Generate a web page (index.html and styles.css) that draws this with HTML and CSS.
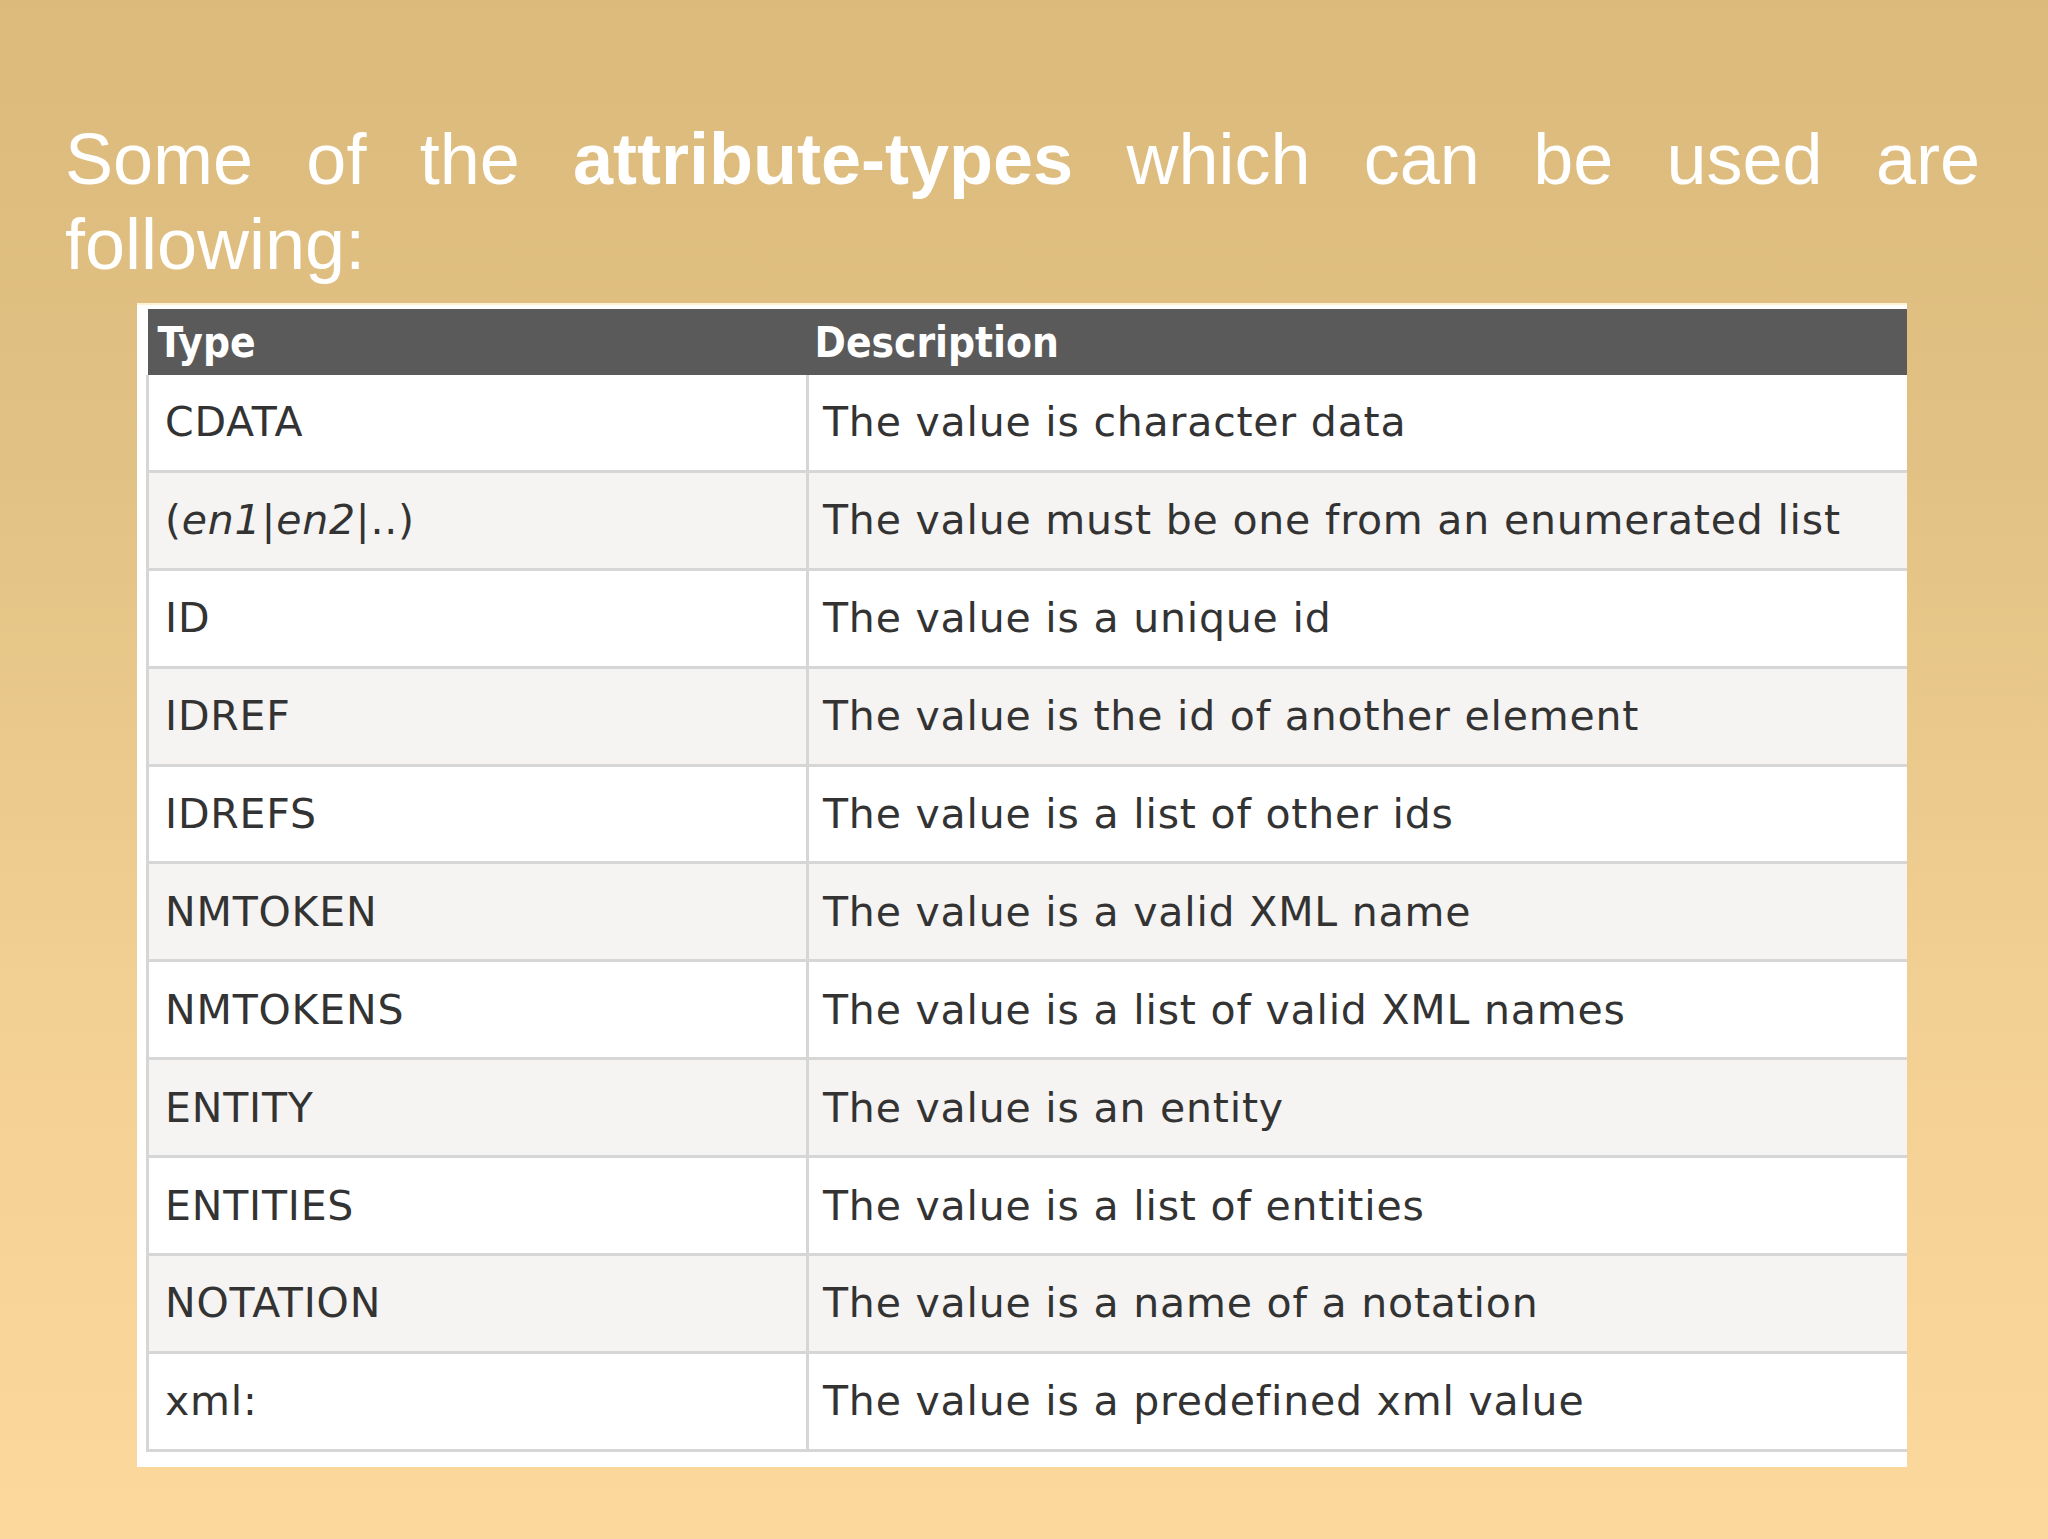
FILE: index.html
```html
<!DOCTYPE html>
<html>
<head>
<meta charset="utf-8">
<link rel="stylesheet" href="styles.css">
</head>
<body>
<div class="slide">
  <p class="title">Some of the <b>attribute-types</b> which can be used are following:</p>
  <div class="frame">
    <table class="types">
      <thead>
        <tr><th class="c1">Type</th><th class="c2">Description</th></tr>
      </thead>
      <tbody>
        <tr><td>CDATA</td><td>The value is character data</td></tr>
        <tr><td>(<i>en1</i>|<i>en2</i>|..)</td><td>The value must be one from an enumerated list</td></tr>
        <tr><td>ID</td><td>The value is a unique id</td></tr>
        <tr><td>IDREF</td><td>The value is the id of another element</td></tr>
        <tr><td>IDREFS</td><td>The value is a list of other ids</td></tr>
        <tr><td>NMTOKEN</td><td>The value is a valid XML name</td></tr>
        <tr><td>NMTOKENS</td><td>The value is a list of valid XML names</td></tr>
        <tr><td>ENTITY</td><td>The value is an entity</td></tr>
        <tr><td>ENTITIES</td><td>The value is a list of entities</td></tr>
        <tr><td>NOTATION</td><td>The value is a name of a notation</td></tr>
        <tr><td>xml:</td><td>The value is a predefined xml value</td></tr>
      </tbody>
    </table>
  </div>
</div>
</body>
</html>
```

FILE: styles.css
```css
html, body {
  margin: 0;
  padding: 0;
}
body {
  width: 2048px;
  height: 1539px;
  overflow: hidden;
}
.slide {
  width: 2048px;
  height: 1539px;
  box-sizing: border-box;
  padding-top: 117px;
  background: linear-gradient(180deg, #dbba7c 0%, #e2c284 30%, #f2cf93 65%, #fdd89d 100%);
}
.title {
  margin: 0 0 16px 65px;
  width: 1915px;
  font-family: "Liberation Sans", Arial, sans-serif;
  font-size: 72px;
  line-height: 85px;
  color: #ffffff;
  text-align: justify;
  text-align-last: left;
}
.title b {
  font-weight: bold;
}
.frame {
  margin-left: 137px;
  width: 1770px;
  box-sizing: border-box;
  background: #ffffff;
  border-top: 2px solid #fff3d4;
  padding: 4px 0 15px 9px;
}
.types {
  width: 100%;
  border-collapse: collapse;
  font-family: "DejaVu Sans", Verdana, sans-serif;
  font-size: 41px;
  letter-spacing: 0.8px;
  color: #333333;
}
.types th {
  background: #5a5a5a;
  color: #ffffff;
  text-align: left;
  font-family: "DejaVu Sans Condensed", "DejaVu Sans", sans-serif;
  font-stretch: condensed;
  font-weight: bold;
  font-size: 42px;
  letter-spacing: 0;
  height: 66px;
  padding: 0 0 0 10px;
  vertical-align: middle;
}
.types th.c1 {
  width: 650px;
}
.types th.c2 {
  padding-left: 7px;
}
.types td {
  height: 94.9px;
  padding: 0 0 0 14px;
  border-bottom: 3px solid #d6d6d6;
  vertical-align: middle;
  white-space: nowrap;
}
.types td:first-child {
  border-left: 3px solid #d6d6d6;
  border-right: 3px solid #d6d6d6;
  padding-left: 16px;
}
.types tbody tr:nth-child(odd) td {
  background: #ffffff;
}
.types tbody tr:nth-child(even) td {
  background: #f5f4f2;
}
```
